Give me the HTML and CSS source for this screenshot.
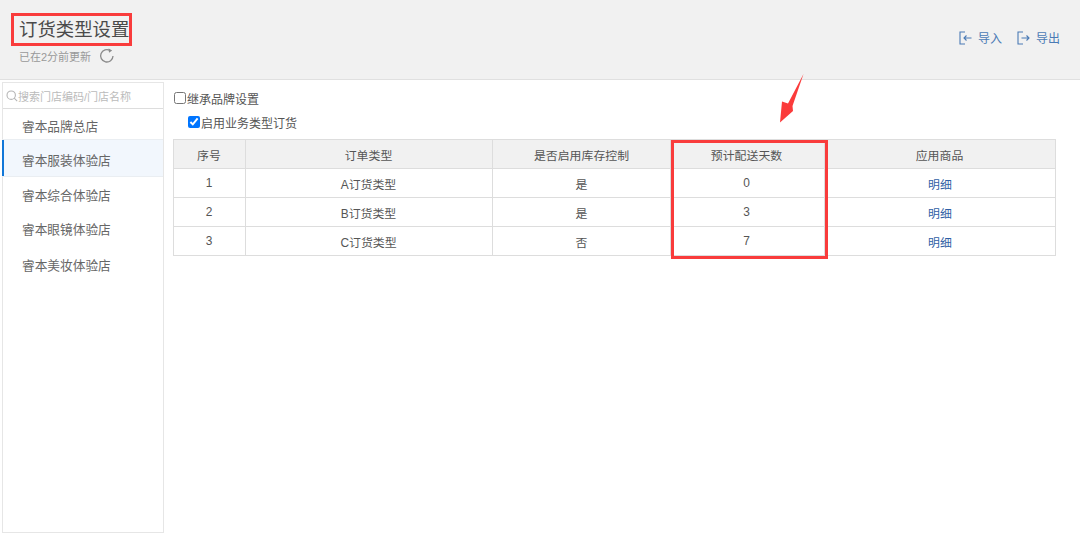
FILE: index.html
```html
<!DOCTYPE html>
<html lang="zh-CN">
<head>
<meta charset="utf-8">
<title>订货类型设置</title>
<link rel="stylesheet" href="styles.css">
</head>
<body>
<header class="topbar">
  <div class="heading">
    <h1 class="title">订货类型设置</h1>
    <div class="updated"><span>已在2分前更新</span>
      <svg class="refresh" width="16" height="16" viewBox="0 0 16 16" fill="none"><path d="M11.2 2.6A6.2 6.2 0 1 0 14 8" stroke="#8a8a8a" stroke-width="1.3"/><path d="M9.6 0.4l3.6 2-3.2 2.4z" fill="#8a8a8a"/></svg>
    </div>
  </div>
  <div class="actions">
    <a class="action"><svg width="14" height="14" viewBox="0 0 14 14" fill="none" stroke="#4a7ab5" stroke-width="1.1"><path d="M6 1H1v12h5"/><path d="M12.5 7H5M7.5 4.5L5 7l2.5 2.5"/></svg>导入</a>
    <a class="action"><svg width="14" height="14" viewBox="0 0 14 14" fill="none" stroke="#4a7ab5" stroke-width="1.1"><path d="M6 1H1v12h5"/><path d="M4.5 7H12M9.5 4.5L12 7l-2.5 2.5"/></svg>导出</a>
  </div>
</header>
<main class="content">
  <aside class="sidebar">
    <div class="search">
      <svg width="12" height="12" viewBox="0 0 12 12" fill="none" stroke="#b5b5b5" stroke-width="1.1"><circle cx="5.2" cy="5.2" r="4.2"/><path d="M8.2 8.2l3 3"/></svg>
      <span>搜索门店编码/门店名称</span>
    </div>
    <ul class="stores">
      <li class="store s1">睿本品牌总店</li>
      <li class="store s2 active">睿本服装体验店</li>
      <li class="store s3">睿本综合体验店</li>
      <li class="store s4">睿本眼镜体验店</li>
      <li class="store s5">睿本美妆体验店</li>
    </ul>
  </aside>
  <section class="panel">
    <label class="check"><input type="checkbox">继承品牌设置</label>
    <label class="check sub"><input type="checkbox" checked>启用业务类型订货</label>
    <table class="grid">
      <colgroup><col class="c1"><col class="c2"><col class="c3"><col class="c4"><col class="c5"></colgroup>
      <thead><tr><th>序号</th><th>订单类型</th><th>是否启用库存控制</th><th>预计配送天数</th><th>应用商品</th></tr></thead>
      <tbody>
        <tr><td>1</td><td>A订货类型</td><td>是</td><td>0</td><td><a class="link">明细</a></td></tr>
        <tr><td>2</td><td>B订货类型</td><td>是</td><td>3</td><td><a class="link">明细</a></td></tr>
        <tr><td>3</td><td>C订货类型</td><td>否</td><td>7</td><td><a class="link">明细</a></td></tr>
      </tbody>
    </table>
  </section>
</main>
<div class="mark mark-title"></div>
<div class="mark mark-col"></div>
<svg class="arrow" width="30" height="50" viewBox="0 0 30 50"><path d="M24.5 0L13.5 32 14 37 1 48.5 3 27.5 9 29.5z" fill="#fb3b3b"/></svg>
</body>
</html>
```
FILE: styles.css
```css
* { box-sizing: border-box; }
html, body { margin: 0; padding: 0; }
body {
  width: 1080px;
  height: 536px;
  background: #fff;
  overflow: hidden;
  position: relative;
  font-family: "Liberation Sans", "Noto Sans CJK SC", sans-serif;
  font-size: 12px;
  color: #555;
}
.topbar {
  height: 80px;
  background: #f1f1f1;
  border-bottom: 1px solid #e0e0e0;
  display: flex;
  justify-content: space-between;
  padding: 18px 20px 0 19px;
}
.title {
  margin: 0;
  font-size: 18.4px;
  line-height: 24px;
  font-weight: 400;
  color: #4a4a4a;
}
.updated {
  display: flex;
  align-items: center;
  gap: 9px;
  margin-top: 7px;
  font-size: 11px;
  line-height: 16px;
  color: #999;
}
.refresh { position: relative; top: -1px; left: -1px; }
.actions {
  display: flex;
  gap: 15px;
  padding-top: 12px;
  height: 27px;
}
.action {
  display: flex;
  align-items: center;
  gap: 5px;
  color: #4a7ab5;
  font-size: 12px;
}
.content {
  display: flex;
  align-items: flex-start;
  padding: 2px 0 0 2px;
}
.sidebar {
  width: 162px;
  height: 451px;
  border: 1px solid #e6e6e6;
  flex: none;
}
.search {
  height: 26px;
  border-bottom: 1px solid #ddd;
  display: flex;
  align-items: center;
  gap: 0;
  padding-left: 3px;
  font-size: 11px;
  color: #bbb;
}
.stores { list-style: none; margin: 0; padding: 0; }
.store { padding-left: 19px; font-size: 12.7px; line-height: 18px; color: #666; }
.s1 { height: 30px; padding-top: 9px; }
.s2 { height: 38px; padding-top: 12px; }
.s3 { height: 35px; padding-top: 10px; }
.s4 { height: 35px; padding-top: 9px; }
.s5 { height: 35px; padding-top: 10px; }
.active {
  background: #f2f7fd;
  border-top: 1px solid #eaeef2;
  border-bottom: 1px solid #eaeef2;
  box-shadow: inset 2px 0 0 #1177d8;
  margin-left: -1px;
  padding-left: 20px;
}
.panel { flex: 1; padding: 8px 24px 0 9px; }
.check {
  display: flex;
  align-items: center;
  height: 16px;
  font-size: 12px;
  color: #555;
}
.check input { margin: 0 1px 0 1px; width: 12px; height: 12px; accent-color: #0075ff; }
.sub { margin: 8px 0 0 14px; }
.grid {
  margin-top: 9px;
  width: 882px;
  border-collapse: collapse;
  table-layout: fixed;
  font-size: 11.9px;
  color: #555;
}
.c1 { width: 72px; }
.c2 { width: 247px; }
.c3 { width: 178px; }
.c4 { width: 154px; }
.c5 { width: 231px; }
.grid th, .grid td {
  border: 1px solid #ddd;
  height: 29px;
  padding: 0;
  text-align: center;
  font-weight: 400;
}
.grid th:first-child, .grid td:first-child,
.grid th:nth-child(2), .grid td:nth-child(2),
.grid th:nth-child(5) { padding-right: 1px; }
.grid th:nth-child(4), .grid td:nth-child(4) { padding-right: 2px; }
.grid th { background: #f1f1f1; }
.link { color: #2f5fa5; }
.mark { position: absolute; border: 3px solid #f93c3c; pointer-events: none; }
.mark-title { left: 11px; top: 13px; width: 121px; height: 33px; }
.mark-col { left: 671px; top: 140px; width: 157px; height: 119px; }
.arrow { position: absolute; left: 779px; top: 74px; }
```
